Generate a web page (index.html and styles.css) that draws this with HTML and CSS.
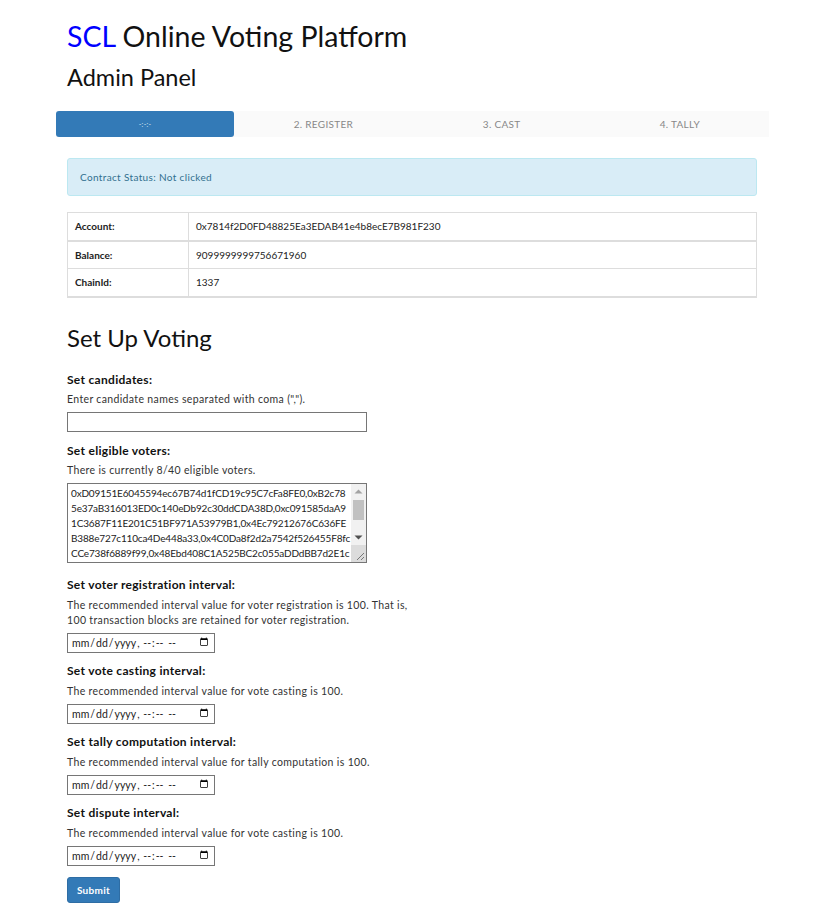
FILE: index.html
```html
<!DOCTYPE html>
<html>
<head>
<meta charset="utf-8">
<link rel="stylesheet" href="styles.css">
</head>
<body>
<div class="page">
  <h1 class="title"><span class="brand">SCL</span> Online Voting Platform</h1>
  <h2 class="subtitle">Admin Panel</h2>

  <div class="steps">
    <div class="step active">-:-:-</div>
    <div class="step">2. Register</div>
    <div class="step">3. Cast</div>
    <div class="step">4. Tally</div>
  </div>

  <div class="alert">Contract Status: Not clicked</div>

  <table class="info">
    <tr><th>Account:</th><td>0x7814f2D0FD48825Ea3EDAB41e4b8ecE7B981F230</td></tr>
    <tr><th>Balance:</th><td>9099999999756671960</td></tr>
    <tr><th>ChainId:</th><td>1337</td></tr>
  </table>

  <h2 class="section">Set Up Voting</h2>

  <form class="setup">
    <div class="field">
      <label class="label">Set candidates:</label>
      <p class="hint">Enter candidate names separated with coma (",").</p>
      <input class="text-input" type="text">
    </div>
    <div class="field field-voters">
      <label class="label">Set eligible voters:</label>
      <p class="hint">There is currently 8/40 eligible voters.</p>
      <div class="voters-box">
        <textarea class="voters">0xD09151E6045594ec67B74d1fCD19c95C7cFa8FE0,0xB2c785e37aB316013ED0c140eDb92c30ddCDA38D,0xc091585daA91C3687F11E201C51BF971A53979B1,0x4Ec79212676C636FEB388e727c110ca4De448a33,0x4C0Da8f2d2a7542f526455F8fcCCe738f6889f99,0x48Ebd408C1A525BC2c055aDDdBB7d2E1c03a9F44,0x91aB2c7E3d04F5a6C8e1B7D2f9A0c3E5b6D7f812,0x0E3fA9c5D21b7B64e8C0a3F5d9E2B1c4A7f6D830</textarea>
        <div class="scrollbar" aria-hidden="true">
          <div class="sb-btn"><svg width="15" height="15" viewBox="0 0 15 15"><path d="M3.5 9.5 L7.5 5.5 L11.5 9.5 Z" fill="#a3a3a3"/></svg></div>
          <div class="sb-track"><div class="sb-thumb"></div></div>
          <div class="sb-btn"><svg width="15" height="15" viewBox="0 0 15 15"><path d="M3.5 5.5 L7.5 9.5 L11.5 5.5 Z" fill="#505050"/></svg></div>
          <div class="sb-corner"><svg width="15" height="15" viewBox="0 0 15 15"><path d="M13 6 L6 13 M13 10 L10 13" stroke="#777" stroke-width="1" fill="none"/></svg></div>
        </div>
      </div>
    </div>
    <div class="field">
      <label class="label">Set voter registration interval:</label>
      <p class="hint">The recommended interval value for voter registration is 100. That is,<br>100 transaction blocks are retained for voter registration.</p>
      <input class="date-input" type="datetime-local">
    </div>
    <div class="field">
      <label class="label">Set vote casting interval:</label>
      <p class="hint">The recommended interval value for vote casting is 100.</p>
      <input class="date-input" type="datetime-local">
    </div>
    <div class="field">
      <label class="label">Set tally computation interval:</label>
      <p class="hint">The recommended interval value for tally computation is 100.</p>
      <input class="date-input" type="datetime-local">
    </div>
    <div class="field">
      <label class="label">Set dispute interval:</label>
      <p class="hint">The recommended interval value for vote casting is 100.</p>
      <input class="date-input" type="datetime-local">
    </div>
    <button class="submit" type="button">Submit</button>
  </form>
</div>
</body>
</html>
```

FILE: styles.css
```css
* { box-sizing: border-box; }
body {
  margin: 0;
  font-family: Lato, "Liberation Sans", sans-serif;
  color: #222;
  background: #fff;
}
.page {
  width: 690px;
  margin-left: 67px;
  padding-top: 18px;
}
.title {
  margin: 0;
  font-size: 28.5px;
  font-weight: 400;
  line-height: 36px;
  color: #111;
}
.brand { color: #0000ff; }
.subtitle {
  margin: 8px 0 0;
  font-size: 23.5px;
  font-weight: 400;
  line-height: 30px;
  color: #111;
}
.steps {
  display: flex;
  margin: 19px 0 0 -11px;
  width: 713px;
  background: #fafafa;
  height: 26px;
}
.step {
  flex: 1;
  display: flex;
  align-items: center;
  justify-content: center;
  font-size: 10px;
  text-transform: uppercase;
  color: #888;
  letter-spacing: 0.3px;
}
.step.active {
  background: #337ab7;
  color: #d6e4f2;
  border-radius: 3px;
  font-size: 7px;
}
.alert {
  margin-top: 21px;
  height: 38px;
  padding: 0 12px;
  display: flex;
  align-items: center;
  background: #d9edf7;
  border: 1px solid #bce8f1;
  border-radius: 3px;
  color: #31708f;
  font-size: 10px;
  letter-spacing: 0.35px;
}
.info {
  margin-top: 16px;
  width: 100%;
  border-collapse: collapse;
  border: 1px solid #ddd;
  font-size: 10px;
}
.info th, .info td {
  border: 1px solid #ddd;
  height: 28px;
  padding: 0 7px;
  text-align: left;
  vertical-align: middle;
}
.info tr:first-child th, .info tr:first-child td { border-bottom-width: 2px; }
.info tr:last-child th, .info tr:last-child td { border-bottom-width: 2px; }
.info th { width: 121px; font-weight: 700; }
.section {
  margin: 23px 0 0;
  font-size: 24px;
  font-weight: 400;
  line-height: 34px;
  color: #111;
}
.setup { margin-top: 18px; }
.field { margin-bottom: 11.5px; }
.field-voters { margin-bottom: 15px; }
.label {
  display: block;
  font-size: 12px;
  font-weight: 700;
  line-height: 14px;
  letter-spacing: 0.3px;
  color: #111;
}
.hint {
  margin: 5.5px 0 5px;
  font-size: 10.5px;
  line-height: 15px;
  letter-spacing: 0.35px;
  color: #333;
}
.text-input {
  display: block;
  width: 300px;
  height: 20px;
  border: 1px solid #767676;
  border-radius: 0;
  font-family: inherit;
}
.voters-box {
  display: flex;
  width: 300px;
  height: 80px;
  border: 1px solid #767676;
}
.voters {
  flex: 1;
  min-width: 0;
  height: 100%;
  border: none;
  outline: none;
  padding: 2px 0 2px 3px;
  font-family: inherit;
  font-size: 10px;
  line-height: 15px;
  letter-spacing: -0.16px;
  color: #222;
  resize: none;
  overflow: hidden;
  word-break: break-all;
}
.scrollbar {
  width: 15px;
  display: flex;
  flex-direction: column;
  background: #f1f1f1;
}
.sb-btn { height: 15px; }
.sb-btn svg, .sb-corner svg { display: block; }
.sb-track {
  flex: 1;
  padding: 1px 2px 0;
}
.sb-thumb {
  height: 20px;
  background: #c1c1c1;
}
.sb-corner {
  height: 17px;
  display: flex;
  align-items: flex-end;
  background: #dcdcdc;
}
.date-input {
  display: block;
  width: 148px;
  height: 20px;
  border: 1px solid #767676;
  border-radius: 0;
  padding: 0 3px;
  font-family: inherit;
  font-size: 10.5px;
  color: #222;
}
.date-input::-webkit-datetime-edit-text { padding: 0; }
.date-input::-webkit-datetime-edit-fields-wrapper { padding: 0; }
.submit {
  display: block;
  width: 53px;
  height: 26px;
  background: #337ab7;
  border: 1px solid #2e6da4;
  border-radius: 3px;
  color: #fff;
  font-family: inherit;
  font-weight: 700;
  font-size: 10px;
  letter-spacing: 0.3px;
}
```
